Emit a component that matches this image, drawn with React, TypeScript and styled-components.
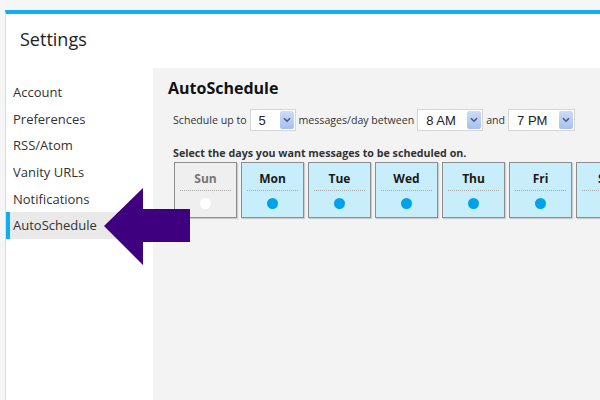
import React from 'react';
import styled, { createGlobalStyle } from 'styled-components';

const GlobalStyle = createGlobalStyle`
	html, body {
		margin: 0;
		padding: 0;
		background: #f6f6f6;
		width: 600px;
		height: 400px;
		overflow: hidden;
	}
	* {
		box-sizing: border-box;
	}
`;

const days = [
	{ label: 'Sun', on: false },
	{ label: 'Mon', on: true },
	{ label: 'Tue', on: true },
	{ label: 'Wed', on: true },
	{ label: 'Thu', on: true },
	{ label: 'Fri', on: true },
	{ label: 'Sat', on: true },
];

const menu = ['Account', 'Preferences', 'RSS/Atom', 'Vanity URLs', 'Notifications', 'AutoSchedule'];

const Page = styled.div`
	position: relative;
	width: 600px;
	height: 400px;
	padding: 10px 0 0 5px;
	font-family: 'Open Sans', 'DejaVu Sans', sans-serif;
`;

const Modal = styled.div`
	display: flex;
	flex-direction: column;
	width: 600px;
	height: 390px;
	background: #ffffff;
	border-top: 4px solid #0cafef;
	border-left: 1px solid #dcdcdc;
`;

const Header = styled.div`
	height: 54px;
	display: flex;
	align-items: center;
	padding: 0 0 4px 14px;
	font-size: 18px;
	color: #222;
`;

const Body = styled.div`
	flex: 1;
	display: flex;
`;

const Sidebar = styled.ul`
	list-style: none;
	margin: 0;
	padding: 11px 0 0 0;
	width: 147px;
	flex-shrink: 0;
`;

const MenuItem = styled.li<{ $active?: boolean }>`
	height: 26.6px;
	display: flex;
	align-items: center;
	padding-left: 3px;
	font-size: 13px;
	color: #333;
	background: ${(p) => (p.$active ? '#e9e9e9' : 'transparent')};
	border-left: 4px solid ${(p) => (p.$active ? '#0cafef' : 'transparent')};
`;

const Content = styled.div`
	flex: 1;
	background: #f3f3f3;
	padding: 9px 0 0 15px;
`;

const Heading = styled.h2`
	margin: 0;
	font-size: 16px;
	font-weight: 700;
	color: #111;
	line-height: 22px;
`;

const ScheduleRow = styled.div`
	display: flex;
	align-items: center;
	gap: 3px;
	margin-top: 10px;
	padding-left: 5px;
	font-size: 10.6px;
	color: #333;
`;

const Select = styled.div<{ $w: number }>`
	display: flex;
	align-items: center;
	justify-content: space-between;
	width: ${(p) => p.$w}px;
	height: 22px;
	background: #fff;
	border: 1px solid #d6d6d6;
	padding: 1px 1px 1px 8px;
	font-family: 'Liberation Sans', Arial, sans-serif;
	font-size: 13px;
	color: #222;
`;

const SelectButton = styled.span`
	width: 14px;
	height: 100%;
	display: flex;
	align-items: center;
	justify-content: center;
	background: linear-gradient(#cddcf7, #a8c0ee);
	border-radius: 2px;
`;

const DaysLabel = styled.div`
	margin-top: 15px;
	padding-left: 5px;
	font-size: 10.7px;
	font-weight: 700;
	color: #333;
`;

const DayRow = styled.div`
	display: flex;
	gap: 4px;
	margin-top: 2px;
	padding-left: 6px;
`;

const DayBox = styled.div<{ $on: boolean }>`
	flex-shrink: 0;
	width: 63px;
	height: 56px;
	display: flex;
	flex-direction: column;
	align-items: center;
	padding: 8px 5px 0;
	background: ${(p) => (p.$on ? '#c8eefc' : '#efefef')};
	border: 1px solid #8d8d8d;
	box-shadow: 1px 1px 1px rgba(0, 0, 0, 0.15);
`;

const DayName = styled.div<{ $on: boolean }>`
	font-size: 12px;
	font-weight: 700;
	color: ${(p) => (p.$on ? '#1a1a1a' : '#777')};
	line-height: 16px;
	width: 100%;
	text-align: center;
	padding-bottom: 3px;
	border-bottom: 1px dotted #a9a9a9;
`;

const Dot = styled.span<{ $on: boolean }>`
	margin-top: 7px;
	width: 11px;
	height: 11px;
	border-radius: 50%;
	background: ${(p) => (p.$on ? '#00a2ea' : '#ffffff')};
`;

const Arrow = styled.svg`
	position: absolute;
	left: 104px;
	top: 188px;
`;

const Chevron = () => (
	<svg width="8" height="6" viewBox="0 0 8 6">
		<path d="M1 1.2 L4 4.2 L7 1.2" fill="none" stroke="#46578a" strokeWidth="1.6" />
	</svg>
);

const Dropdown = ({ value, width }: { value: string; width: number }) => (
	<Select $w={width}>
		<span>{value}</span>
		<SelectButton>
			<Chevron />
		</SelectButton>
	</Select>
);

const App = (): JSX.Element => {
	return (
		<Page>
			<GlobalStyle />
			<Modal>
				<Header>Settings</Header>
				<Body>
					<Sidebar>
						{menu.map((m) => (
							<MenuItem key={m} $active={m === 'AutoSchedule'}>
								{m}
							</MenuItem>
						))}
					</Sidebar>
					<Content>
						<Heading>AutoSchedule</Heading>
						<ScheduleRow>
							<span>Schedule up to</span>
							<Dropdown value="5" width={46} />
							<span>messages/day between</span>
							<Dropdown value="8 AM" width={66} />
							<span>and</span>
							<Dropdown value="7 PM" width={67} />
						</ScheduleRow>
						<DaysLabel>Select the days you want messages to be scheduled on.</DaysLabel>
						<DayRow>
							{days.map((d) => (
								<DayBox key={d.label} $on={d.on}>
									<DayName $on={d.on}>{d.label}</DayName>
									<Dot $on={d.on} />
								</DayBox>
							))}
						</DayRow>
					</Content>
				</Body>
			</Modal>
			<Arrow width="86" height="77" viewBox="0 0 86 77">
				<polygon points="0,38 39,0 39,21 86,21 86,54 39,54 39,77" fill="#3f0080" />
			</Arrow>
		</Page>
	);
};

export default App;
